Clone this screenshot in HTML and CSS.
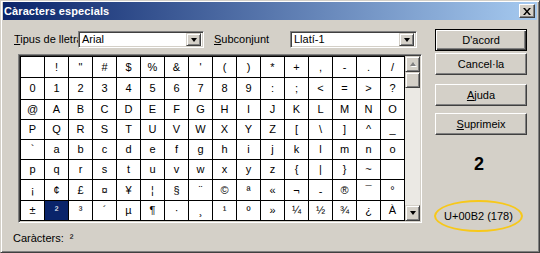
FILE: index.html
```html
<!DOCTYPE html>
<html lang="ca">
<head>
<meta charset="UTF-8" />
<title>Caràcters especials</title>
<link rel="stylesheet" href="styles.css">
</head>
<body>
  <div class="window">
    <div class="titlebar">
      <span class="title">Càracters especials</span>
      <button class="close-btn" aria-label="Tanca">
        <svg viewBox="0 0 8 7" width="8" height="7" aria-hidden="true">
          <path d="M0 0h2l2 2.5L6 0h2L5 3.5 8 7H6L4 4.5 2 7H0l3-3.5z"/>
        </svg>
      </button>
    </div>
    <div class="client">
      <div class="main">
        <div class="font-row">
          <label class="lbl lbl-font"><u>T</u>ipus de lletra</label>
          <div class="combo combo-font">
            <span class="combo-text">Arial</span>
            <span class="combo-arrow"><i class="tri-down"></i></span>
          </div>
          <label class="lbl lbl-subset"><u>S</u>ubconjunt</label>
          <div class="combo combo-subset">
            <span class="combo-text">Llatí-1</span>
            <span class="combo-arrow"><i class="tri-down"></i></span>
          </div>
        </div>

        <div class="charmap">
          <div class="grid">
            <span class="cell"></span><span class="cell">!</span><span class="cell">&quot;</span><span class="cell">#</span><span class="cell">$</span><span class="cell">%</span><span class="cell">&amp;</span><span class="cell">'</span><span class="cell">(</span><span class="cell">)</span><span class="cell">*</span><span class="cell">+</span><span class="cell">,</span><span class="cell">-</span><span class="cell">.</span><span class="cell">/</span>
            <span class="cell">0</span><span class="cell">1</span><span class="cell">2</span><span class="cell">3</span><span class="cell">4</span><span class="cell">5</span><span class="cell">6</span><span class="cell">7</span><span class="cell">8</span><span class="cell">9</span><span class="cell">:</span><span class="cell">;</span><span class="cell">&lt;</span><span class="cell">=</span><span class="cell">&gt;</span><span class="cell">?</span>
            <span class="cell">@</span><span class="cell">A</span><span class="cell">B</span><span class="cell">C</span><span class="cell">D</span><span class="cell">E</span><span class="cell">F</span><span class="cell">G</span><span class="cell">H</span><span class="cell">I</span><span class="cell">J</span><span class="cell">K</span><span class="cell">L</span><span class="cell">M</span><span class="cell">N</span><span class="cell">O</span>
            <span class="cell">P</span><span class="cell">Q</span><span class="cell">R</span><span class="cell">S</span><span class="cell">T</span><span class="cell">U</span><span class="cell">V</span><span class="cell">W</span><span class="cell">X</span><span class="cell">Y</span><span class="cell">Z</span><span class="cell">[</span><span class="cell">\</span><span class="cell">]</span><span class="cell">^</span><span class="cell">_</span>
            <span class="cell">`</span><span class="cell">a</span><span class="cell">b</span><span class="cell">c</span><span class="cell">d</span><span class="cell">e</span><span class="cell">f</span><span class="cell">g</span><span class="cell">h</span><span class="cell">i</span><span class="cell">j</span><span class="cell">k</span><span class="cell">l</span><span class="cell">m</span><span class="cell">n</span><span class="cell">o</span>
            <span class="cell">p</span><span class="cell">q</span><span class="cell">r</span><span class="cell">s</span><span class="cell">t</span><span class="cell">u</span><span class="cell">v</span><span class="cell">w</span><span class="cell">x</span><span class="cell">y</span><span class="cell">z</span><span class="cell">{</span><span class="cell">|</span><span class="cell">}</span><span class="cell">~</span><span class="cell"></span>
            <span class="cell">¡</span><span class="cell">¢</span><span class="cell">£</span><span class="cell">¤</span><span class="cell">¥</span><span class="cell">¦</span><span class="cell">§</span><span class="cell">¨</span><span class="cell">©</span><span class="cell">ª</span><span class="cell">«</span><span class="cell">¬</span><span class="cell shy">-</span><span class="cell">®</span><span class="cell">¯</span><span class="cell">°</span>
            <span class="cell">±</span><span class="cell selected">²</span><span class="cell">³</span><span class="cell">´</span><span class="cell">µ</span><span class="cell">¶</span><span class="cell">·</span><span class="cell">¸</span><span class="cell">¹</span><span class="cell">º</span><span class="cell">»</span><span class="cell">¼</span><span class="cell">½</span><span class="cell">¾</span><span class="cell">¿</span><span class="cell">À</span>
          </div>
          <div class="scrollbar">
            <span class="sb-btn"><i class="tri-up"></i></span>
            <span class="sb-thumb"></span>
            <span class="sb-track"></span>
            <span class="sb-btn"><i class="tri-down"></i></span>
          </div>
        </div>

        <div class="chars">Caràcters:&nbsp; ²</div>
      </div>

      <div class="side">
        <button class="btn btn-default">D'acord</button>
        <button class="btn btn-cancel">Cancel·la</button>
        <button class="btn btn-help"><u>A</u>juda</button>
        <button class="btn btn-delete"><u>S</u>uprimeix</button>
        <div class="preview">2</div>
        <div class="code">U+00B2 (178)</div>
      </div>
    </div>
  </div>
</body>
</html>
```

FILE: styles.css
```css
:root {
  --face: #d4d0c8;
  --shadow: #808080;
  --dark: #404040;
  --hilite: #fff;
  --title-a: #0a246a;
  --title-b: #a6caf0;
  --mark: #f7c81a;
}
html, body {
  margin: 0;
  padding: 0;
  background: var(--face);
}
body {
  font-family: 'Liberation Sans', Arial, sans-serif;
  font-size: 11px;
  color: #000;
}
u {
  text-decoration: underline;
  text-underline-offset: 1px;
}

/* window frame */
.window {
  width: 540px;
  height: 253px;
  box-sizing: border-box;
  background: var(--face);
  border: 1px solid;
  border-color: var(--face) var(--dark) var(--dark) var(--face);
  box-shadow: inset 1px 1px var(--hilite), inset -1px -1px var(--shadow);
  padding: 1px 2px 2px 2px;
  display: flex;
  flex-direction: column;
}
.titlebar {
  height: 18px;
  background: linear-gradient(to right, var(--title-a), var(--title-b));
  display: flex;
  align-items: center;
  justify-content: space-between;
  padding: 0 2px 0 1px;
}
.title {
  color: #fff;
  font-weight: bold;
  font-size: 11px;
  letter-spacing: 0.1px;
}
.close-btn {
  width: 16px;
  height: 14px;
  padding: 0;
  background: var(--face);
  border: 1px solid;
  border-color: var(--hilite) var(--dark) var(--dark) var(--hilite);
  box-shadow: inset -1px -1px var(--shadow);
  display: flex;
  align-items: center;
  justify-content: center;
}
.close-btn svg {
  fill: #000;
  margin: 0 0 0 0;
}

/* client */
.client {
  flex: 1;
  display: flex;
}
.main {
  width: 432px;
  padding-top: 11px;
}
.font-row {
  display: flex;
  align-items: center;
  height: 17px;
}
.lbl {
  white-space: nowrap;
  overflow: hidden;
  line-height: 17px;
}
.lbl-font {
  width: 64px;
  margin-left: 11px;
}
.lbl-subset {
  width: 76px;
  margin-left: 10px;
  padding-left: 0;
}
.combo {
  height: 17px;
  box-sizing: border-box;
  background: #fff;
  border: 1px solid;
  border-color: var(--shadow) var(--hilite) var(--hilite) var(--shadow);
  box-shadow: inset 1px 1px var(--dark), inset -1px -1px var(--face);
  display: flex;
  align-items: center;
  padding: 2px;
}
.combo-font { width: 126px; }
.combo-subset { width: 127px; }
.combo-text {
  flex: 1;
  padding-left: 1px;
  line-height: 13px;
}
.combo-arrow {
  width: 15px;
  height: 13px;
  box-sizing: border-box;
  background: var(--face);
  border: 1px solid;
  border-color: var(--face) var(--dark) var(--dark) var(--face);
  box-shadow: inset 1px 1px var(--hilite), inset -1px -1px var(--shadow);
  display: flex;
  align-items: center;
  justify-content: center;
}
.tri-down, .tri-up {
  display: block;
  width: 0;
  height: 0;
  border-left: 3.5px solid transparent;
  border-right: 3.5px solid transparent;
}
.tri-down { border-top: 4px solid #000; }
.tri-up {
  border-bottom: 4px solid var(--shadow);
  filter: drop-shadow(1px 1px 0 #fff);
}

/* character table */
.charmap {
  margin: 6px 0 0 15px;
  width: 404px;
  height: 169px;
  box-sizing: border-box;
  border: 1px solid;
  border-color: var(--shadow) var(--hilite) var(--hilite) var(--shadow);
  box-shadow: inset 1px 1px var(--dark), inset -1px -1px var(--face);
  padding: 1px;
  display: flex;
}
.grid {
  display: grid;
  grid-template-columns: repeat(16, 24px);
  grid-template-rows: 21px 22px 20px 20px 20px 20px 21px 20px;
  border-top: 1px solid #000;
  border-left: 1px solid #000;
  background: #fff;
}
.cell {
  box-sizing: border-box;
  border-right: 1px solid #000;
  border-bottom: 1px solid #000;
  display: flex;
  align-items: center;
  justify-content: center;
  font-size: 11px;
  line-height: 1;
}
.cell.selected {
  background: var(--title-a);
  color: #fff;
}
.cell.shy {
  padding-top: 3px;
}
.scrollbar {
  width: 15px;
  display: flex;
  flex-direction: column;
  background: #ebe9e4;
}
.sb-btn, .sb-thumb {
  height: 16px;
  box-sizing: border-box;
  background: var(--face);
  border: 1px solid;
  border-color: var(--face) var(--dark) var(--dark) var(--face);
  box-shadow: inset 1px 1px var(--hilite), inset -1px -1px var(--shadow);
  display: flex;
  align-items: center;
  justify-content: center;
}
.sb-track { flex: 1; }

.chars {
  margin: 8px 0 0 10px;
  line-height: 14px;
}

/* right column */
.side {
  width: 92px;
  padding-top: 9px;
  display: flex;
  flex-direction: column;
}
.btn {
  width: 92px;
  height: 22px;
  box-sizing: border-box;
  font-family: inherit;
  font-size: 11px;
  color: #000;
  background: var(--face);
  border: 1px solid;
  border-color: var(--hilite) var(--dark) var(--dark) var(--hilite);
  box-shadow: inset -1px -1px var(--shadow), inset 1px 1px var(--face);
  padding: 0;
}
.btn-default {
  border-color: #000;
  box-shadow: inset 1px 1px var(--hilite), inset -1px -1px var(--dark), inset -2px -2px var(--shadow);
}
.btn-cancel { margin-top: 2px; }
.btn-help { margin-top: 9px; }
.btn-delete { margin-top: 7px; }
.preview {
  width: 88px;
  margin-top: 19px;
  text-align: center;
  font-size: 18px;
  font-weight: bold;
  line-height: 20px;
}
.code {
  width: 89px;
  height: 32px;
  box-sizing: border-box;
  margin: 26px 0 0 -1px;
  border: 2px solid var(--mark);
  border-radius: 50%;
  display: flex;
  align-items: center;
  justify-content: center;
}
```
